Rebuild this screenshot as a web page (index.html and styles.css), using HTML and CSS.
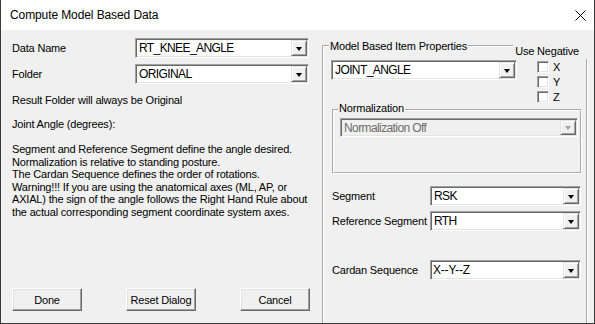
FILE: index.html
```html
<!DOCTYPE html>
<html lang="en">
<head>
    <meta charset="UTF-8">
    <title>Compute Model Based Data</title>
    <link rel="stylesheet" href="styles.css">
</head>
<body>
    <div class="window">
        <div class="titlebar">
            <span class="title">Compute Model Based Data</span>
            <svg class="close" width="11" height="11" viewBox="0 0 11 11">
                <path d="M0.5 0.5 L10.5 10.5 M10.5 0.5 L0.5 10.5" stroke="#000" stroke-width="1" fill="none"/>
            </svg>
        </div>

        <div class="dialog">
            <!-- left side: name, folder and help text -->
            <div class="left-panel">
                <div class="form-row">
                    <label class="label">Data Name</label>
                    <div class="combo combo-name">
                        <span class="combo-value">RT_KNEE_ANGLE</span>
                        <span class="combo-btn"></span>
                    </div>
                </div>
                <div class="form-row">
                    <label class="label">Folder</label>
                    <div class="combo combo-name">
                        <span class="combo-value">ORIGINAL</span>
                        <span class="combo-btn"></span>
                    </div>
                </div>

                <div class="note">Result Folder will always be Original</div>
                <div class="note note-heading">Joint Angle (degrees):</div>
                <p class="help">
                    Segment and Reference Segment define the angle desired.<br>
                    Normalization is relative to standing posture.<br>
                    The Cardan Sequence defines the order of rotations.<br>
                    Warning!!! If you are using the anatomical axes (ML, AP, or<br>
                    AXIAL) the sign of the angle follows the Right Hand Rule about<br>
                    the actual corresponding segment coordinate system axes.
                </p>

                <div class="actions">
                    <button class="btn">Done</button>
                    <button class="btn">Reset Dialog</button>
                    <button class="btn">Cancel</button>
                </div>
            </div>

            <!-- right side: item properties group -->
            <div class="group group-props">
                <span class="group-title">Model Based Item Properties</span>
                <span class="negative-title">Use Negative</span>

                <div class="type-row">
                    <div class="combo combo-type">
                        <span class="combo-value">JOINT_ANGLE</span>
                        <span class="combo-btn"></span>
                    </div>
                    <div class="checks">
                        <div class="check-item"><span class="checkbox"></span>X</div>
                        <div class="check-item"><span class="checkbox"></span>Y</div>
                        <div class="check-item"><span class="checkbox"></span>Z</div>
                    </div>
                </div>

                <div class="group group-norm">
                    <span class="group-title norm-title">Normalization</span>
                    <div class="combo combo-norm disabled">
                        <span class="combo-value">Normalization Off</span>
                        <span class="combo-btn"></span>
                    </div>
                </div>

                <div class="seg-row seg-first">
                    <label class="label seg-label">Segment</label>
                    <div class="combo combo-seg">
                        <span class="combo-value">RSK</span>
                        <span class="combo-btn"></span>
                    </div>
                </div>
                <div class="seg-row seg-ref">
                    <label class="label seg-label">Reference Segment</label>
                    <div class="combo combo-seg">
                        <span class="combo-value">RTH</span>
                        <span class="combo-btn"></span>
                    </div>
                </div>
                <div class="seg-row seg-cardan">
                    <label class="label seg-label">Cardan Sequence</label>
                    <div class="combo combo-seg">
                        <span class="combo-value combo-value-seq">X--Y--Z</span>
                        <span class="combo-btn"></span>
                    </div>
                </div>
            </div>
        </div>
    </div>
</body>
</html>
```

FILE: styles.css
```css
* {
    margin: 0;
    padding: 0;
    box-sizing: border-box;
}

body {
    font-family: "Liberation Sans", Arial, sans-serif;
    font-size: 11px;
    letter-spacing: -0.18px;
    color: #000;
    background: #f0f0f0;
    width: 595px;
    height: 324px;
    overflow: hidden;
}

.window {
    width: 595px;
    height: 324px;
    border: 1px solid #3a3a3a;
    border-top: none;
    background: #f0f0f0;
    display: flex;
    flex-direction: column;
}

.titlebar {
    height: 30px;
    background: #fff;
    display: flex;
    align-items: center;
    justify-content: space-between;
    padding: 0 8px 0 9px;
}

.title {
    font-size: 12px;
    letter-spacing: -0.1px;
    color: #000;
}

.close {
    display: block;
    margin-top: 1px;
}

.dialog {
    flex: 1;
    display: flex;
    overflow: hidden;
}

/* left panel */
.left-panel {
    width: 321px;
    padding: 8px 0 12px 11px;
    display: flex;
    flex-direction: column;
}

.form-row {
    display: flex;
    align-items: center;
    margin-bottom: 6px;
}

.form-row .label {
    width: 123px;
}

.note {
    line-height: 13px;
    margin-top: 4px;
}

.note-heading {
    margin-top: 11px;
}

.help {
    line-height: 12.5px;
    margin-top: 12px;
    white-space: nowrap;
}

.actions {
    margin-top: auto;
    display: flex;
    gap: 44px;
}

.btn {
    width: 70px;
    height: 23px;
    font-family: inherit;
    font-size: 11px;
    letter-spacing: -0.18px;
    color: #000;
    background: #f0f0f0;
    border: 1px solid;
    border-color: #fff #696969 #696969 #fff;
    box-shadow: inset -1px -1px 0 #a0a0a0, inset 1px 1px 0 #e3e3e3;
}

/* combo boxes */
.combo {
    height: 20px;
    display: flex;
    align-items: stretch;
    background: #fff;
    border: 1px solid;
    border-color: #a0a0a0 #fff #fff #a0a0a0;
    box-shadow: inset 1px 1px 0 #696969, inset -1px -1px 0 #e3e3e3;
    padding: 1px;
}

.combo-value {
    flex: 1;
    padding-left: 2px;
    font-size: 12px;
    letter-spacing: -0.6px;
    line-height: 17px;
    white-space: nowrap;
    overflow: hidden;
}

.combo-value-seq {
    padding-left: 1px;
    letter-spacing: -0.2px;
}

.combo-btn {
    width: 16px;
    background: #f0f0f0;
    border: 1px solid;
    border-color: #e3e3e3 #696969 #696969 #e3e3e3;
    box-shadow: inset 1px 1px 0 #fff, inset -1px -1px 0 #a0a0a0;
    display: flex;
    align-items: center;
    justify-content: center;
}

.combo-btn::after {
    content: "";
    width: 0;
    height: 0;
    border-left: 3.5px solid transparent;
    border-right: 3.5px solid transparent;
    border-top: 4px solid #000;
    margin-top: 1px;
}

.combo-name {
    width: 174px;
}

.combo-type {
    width: 186px;
}

.combo-seg {
    width: 151px;
}

.combo-norm {
    width: 238px;
    height: 19px;
    margin: 7px 0 0 6px;
}

.combo.disabled {
    background: #f0f0f0;
    color: #6d6d6d;
}

.combo.disabled .combo-value {
    line-height: 16px;
}

.combo.disabled .combo-btn::after {
    border-top-color: #a0a0a0;
}

/* group boxes */
.group {
    position: relative;
    border: 2px groove #fff;
}

.group-title {
    position: absolute;
    top: -7px;
    left: 5px;
    padding: 0 1px;
    line-height: 13px;
    background: #f0f0f0;
    white-space: nowrap;
}

.group-props {
    width: 266px;
    margin: 15px 0 -8px 0;
    padding: 13px 0 0 7px;
}

.negative-title {
    position: absolute;
    top: -3px;
    right: -2px;
    line-height: 15px;
    padding: 0 9px 0 2px;
    background: #f0f0f0;
}

.type-row {
    display: flex;
    align-items: flex-start;
}

.checks {
    margin: 1px 0 0 20px;
}

.check-item {
    display: flex;
    align-items: flex-start;
    height: 15px;
    line-height: 12px;
    gap: 4px;
}

.checkbox {
    width: 12px;
    height: 12px;
    background: #fff;
    border: 1px solid;
    border-color: #a0a0a0 #fff #fff #a0a0a0;
    box-shadow: inset 1px 1px 0 #696969, inset -1px -1px 0 #e3e3e3;
}

.group-norm {
    width: 250px;
    height: 65px;
    margin: 3px 0 0 1px;
}

.norm-title {
    top: -9px;
    left: 4px;
}

.seg-row {
    display: flex;
    align-items: center;
    margin-left: 1px;
}

.seg-label {
    width: 98px;
    white-space: nowrap;
}

.seg-first {
    margin-top: 12px;
}

.seg-ref {
    margin-top: 5px;
}

.seg-cardan {
    margin-top: 29px;
}
```
